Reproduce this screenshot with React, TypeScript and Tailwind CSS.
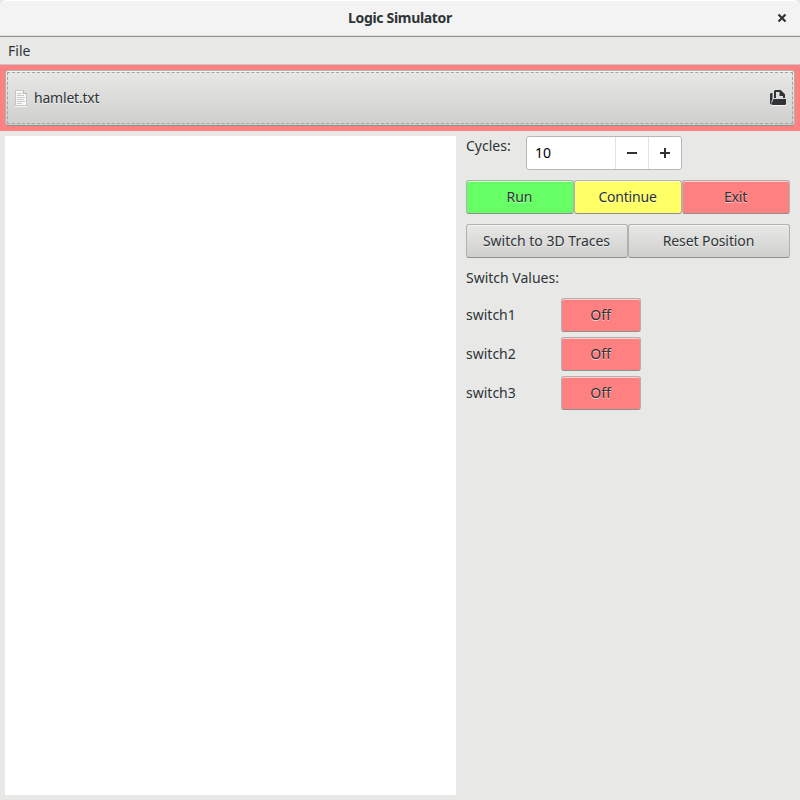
import React from "react";

const raised =
  "flex items-center justify-center rounded-[3px] border border-[#b1b1af] border-b-[#8f8f8c] [text-shadow:0_1px_rgba(255,255,255,0.6)]";

function Button({ label, className }: { label: string; className: string }) {
  return (
    <button className={`${raised} pr-px ${className}`}>
      <span>{label}</span>
    </button>
  );
}

const grey =
  "bg-linear-to-b from-[#e8e8e7] to-[#cfcfcd] shadow-[inset_0_1px_#f5f5f4]";
const tinted = "shadow-[inset_0_1px_rgba(255,255,255,0.6)]";

function PageIcon() {
  return (
    <svg width="12" height="17" viewBox="0 0 12 17" shapeRendering="crispEdges">
      <path d="M0.5 0.5H8.5L11.5 3.5V15.5H0.5Z" fill="#fafafa" stroke="#c6c6c4" />
      <path d="M8.5 0.5V3.5H11.5" fill="#ddd" stroke="#b4b4b2" />
      <path d="M2 3.5H7M2 5.5H9M2 7.5H10M2 9.5H9M2 11.5H10M2 13.5H7" stroke="#c9c9c7" />
      <path d="M0 16.5H12" stroke="#f7f7f7" />
    </svg>
  );
}

function OpenIcon() {
  return (
    <svg width="16" height="17" viewBox="0 0 16 17" fill="#2e3436">
      <path d="M2 15.5H16" stroke="#f6f6f5" fill="none" />
      <path d="M0 4L1 3H2.5V9L1.5 11V14.5H1L0 13.5Z" />
      <path d="M4 8V1L5 0H10.5L15 4.5V8H13V6H9.5V2H6V8Z" />
      <path d="M10.5 0L15 4.5V5H10.5Z" />
      <path d="M3.5 9H16V14L15 15H2.5L1.5 14L3 10Z" />
    </svg>
  );
}

export default function App() {
  return (
    <div className="flex h-[800px] w-[800px] flex-col overflow-hidden bg-[#e8e8e7] font-['Noto_Sans',sans-serif] text-[14px] leading-[20px] tracking-[0px] whitespace-nowrap text-[#2e3436]">
      <header className="grid h-[37px] shrink-0 grid-cols-[30px_1fr_30px] items-center rounded-t-[7px] border-b border-[#8f918c] bg-[#f3f3f3] shadow-[inset_0_1px_#fff,inset_0_-1px_#e0e0de]">
        <span />
        <h1 className="text-center font-bold tracking-[-0.33px]">Logic Simulator</h1>
        <svg className="ml-[7px]" width="10" height="10" viewBox="0 0 10 10">
          <path d="M1.5 1.5L8.5 8.5M8.5 1.5L1.5 8.5" stroke="#2e3436" strokeWidth="2.2" />
        </svg>
      </header>
      <nav className="flex h-[28px] shrink-0 items-center border-b border-[#c6c6c4] pl-2">File</nav>
      <div className="h-[66px] shrink-0 bg-[#ff8080] px-[5px] pt-[5px] pb-[5px]">
        <button className={`${raised} ${grey} h-full w-full p-px`}>
          <span className="flex h-full w-full items-center border border-dashed border-[#a4a4a2] pr-[6px] pl-[7px]">
            <PageIcon />
            <span className="ml-[7px] flex-1 text-left tracking-[-0.2px]">hamlet.txt</span>
            <OpenIcon />
          </span>
        </button>
      </div>
      <main className="flex flex-1 p-[5px]">
        <div className="w-[451px] bg-white" />
        <section className="ml-[10px] w-[324px]">
          <div className="flex h-[34px]">
            <label className="w-[60px]">Cycles:</label>
            <div className="flex w-[156px] rounded-[3px] border border-[#b6b6b3] bg-white">
              <div className="flex flex-1 items-center pl-2 text-black">10</div>
              <button className="flex w-[33px] items-center justify-center border-l border-[#e3e3e2]">
                <span className="h-[2px] w-[10px] bg-[#2e3436]" />
              </button>
              <button className="flex w-[33px] items-center justify-center border-l border-[#e3e3e2]">
                <svg width="10" height="10" viewBox="0 0 10 10">
                  <path d="M0 5H10M5 0V10" stroke="#2e3436" strokeWidth="2" />
                </svg>
              </button>
            </div>
          </div>
          <div className="mt-[10px] grid h-[34px] grid-cols-3">
            <Button label="Run" className={`bg-[#66ff66] ${tinted}`} />
            <Button label="Continue" className={`bg-[#ffff66] tracking-[-0.2px] ${tinted}`} />
            <Button label="Exit" className={`bg-[#ff8080] tracking-[-0.2px] ${tinted}`} />
          </div>
          <div className="mt-[10px] grid h-[34px] grid-cols-2">
            <Button label="Switch to 3D Traces" className={grey} />
            <Button label="Reset Position" className={`tracking-[-0.1px] ${grey}`} />
          </div>
          <div className="mt-[10px]">Switch Values:</div>
          <div className="mt-[10px] flex flex-col gap-[5px]">
            {["switch1", "switch2", "switch3"].map((name) => (
              <div key={name} className="flex h-[34px]">
                <span className="w-[95px] pt-[7px]">{name}</span>
                <Button label="Off" className={`w-[80px] bg-[#ff8080] ${tinted}`} />
              </div>
            ))}
          </div>
        </section>
      </main>
    </div>
  );
}
